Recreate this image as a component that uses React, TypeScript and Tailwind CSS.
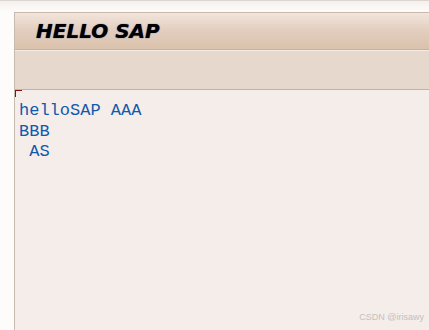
import React from "react";

export default function App() {
  return (
    <div className="relative flex h-[330px] w-[429px] flex-col overflow-hidden bg-[#fdfcfb]">
      {/* top band above the header */}
      <div className="h-[12px] shrink-0 border-t border-[#dcd6d2] bg-gradient-to-b from-[#f6f0ec] to-[#fdfcfa]" />
      <div className="flex flex-1">
        <div className="w-[14px] shrink-0 bg-[#fdfcfb]" />
        <div className="flex flex-1 flex-col border-l border-[#c9bab1]">
          {/* title bar */}
          <div className="flex h-[38px] shrink-0 items-center border-t border-b border-t-[#cbb8ab] border-b-[#c7b0a2] bg-gradient-to-b from-[#f2e5dc] via-[#e2cdbe] to-[#dac2ac] pl-[21px]">
            <span
              className="text-[20px] font-bold italic leading-none text-black"
              style={{ fontFamily: '"DejaVu Sans", sans-serif', textShadow: "0 0 1px #1a2a6a" }}
            >
              HELLO SAP
            </span>
          </div>
          {/* toolbar */}
          <div className="h-[40px] shrink-0 border-t border-b border-t-[#f4ebe5] border-b-[#c8b1a4] bg-[#e7d8cd]" />
          {/* content */}
          <div className="relative flex-1 bg-[#f5ede9]">
            <div className="absolute left-0 top-0 h-[7px] w-[7px] border-l-[1.5px] border-t-[1.5px] border-[#8b1010]" />
            <pre
              className="pl-[4px] pt-[11px] text-[17px] leading-[20.5px] text-[#1159ad]"
              style={{ fontFamily: '"Liberation Mono", monospace' }}
            >
              {"helloSAP AAA\nBBB\n AS"}
            </pre>
          </div>
        </div>
      </div>
      <span
        className="absolute bottom-[6px] right-[5px] text-[9px] text-[#c4c0be]"
        style={{ fontFamily: '"Liberation Sans", sans-serif' }}
      >
        CSDN @irisawy
      </span>
    </div>
  );
}
